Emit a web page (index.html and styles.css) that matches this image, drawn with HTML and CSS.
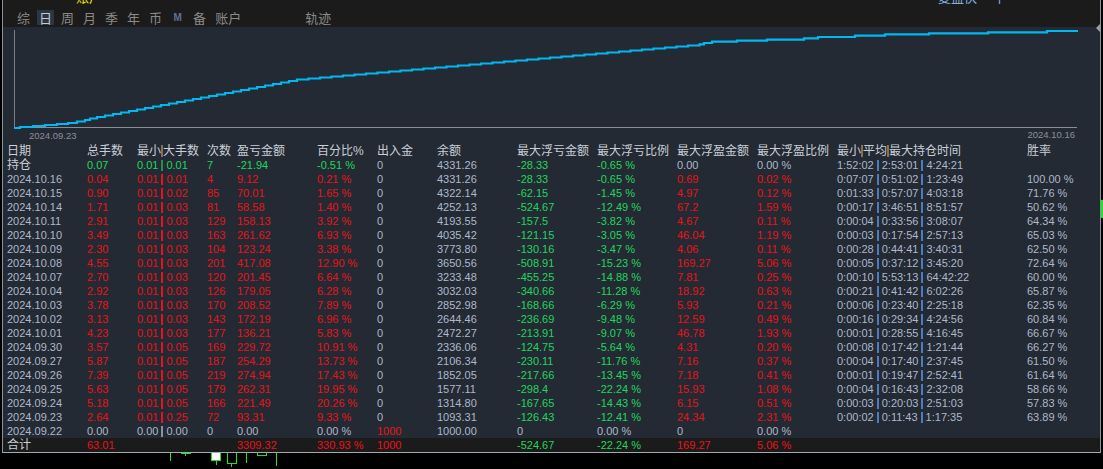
FILE: index.html
```html
<!DOCTYPE html>
<html lang="zh">
<head>
<meta charset="utf-8">
<title>账户统计</title>
<link rel="stylesheet" href="styles.css">
</head>
<body>
<div class="screen">
  <div class="panel">
    <div class="topbar">
      <div class="topcut"><span class="yel">账户</span><span class="blu">复盘快一 丨</span></div>
      <nav class="tabs">
        <span class="tab">综</span>
        <span class="tab on">日</span>
        <span class="tab">周</span>
        <span class="tab">月</span>
        <span class="tab">季</span>
        <span class="tab">年</span>
        <span class="tab">币</span>
        <span class="tab m">M</span>
        <span class="tab">备</span>
        <span class="tab">账户</span>
        <span class="tab far">轨迹</span>
      </nav>
    </div>
    <svg class="chart" width="1097" height="117" viewBox="3 27 1097 117">
      <line x1="14.5" y1="30" x2="14.5" y2="128" stroke="#7a7d82" stroke-width="1"/>
      <line x1="14" y1="127.5" x2="1077" y2="127.5" stroke="#8a8d92" stroke-width="1"/>
      <path fill="none" stroke="#00b8f2" stroke-width="2.2" d="M14 128 H20 V127 H33 V126 H45 V125 H57 V124 H68 V123 H77 V121.5 H85 V120 H90 V118.5 H97 V117 H105 V115.5 H113 V114 H121 V112.5 H129 V111 H137 V109.5 H145 V108 H153 V106.5 H161 V105 H169 V103.5 H177 V102 H185 V100.5 H193 V99 H201 V97.5 H209 V96 H217 V94.5 H225 V93 H233 V91.5 H241 V90 H249 V88.5 H257 V87 H265 V85.5 H273 V84 H281 V82.5 H289 V81 H297 V79.5 H308.5 V78.5 H320 V77.5 H331.5 V76.5 H343 V75.5 H354.5 V74.5 H366 V73.5 H377.5 V72.5 H389 V71.5 H400.5 V70.5 H412 V69.5 H423.5 V68.5 H435 V67.5 H446.5 V66.5 H458 V65.5 H469.5 V64.5 H481 V63.5 H492.5 V62.5 H504 V61.5 H515.5 V60.5 H527 V59.5 H538.5 V58.5 H550 V57.5 H561.5 V56.5 H573 V55.5 H584.5 V54.5 H596 V53.5 H607.5 V52.5 H619 V51.5 H630.5 V50.5 H642 V49.5 H653.5 V48.5 H665 V47.5 H676.5 V46.5 H688 V45.5 H699.5 V44.3 H704 V43 H712 V41.7 H737 V40.7 H767 V39.7 H804 V38.3 H818 V37 H855 V35.7 H885 V34.3 H929 V33.3 H988 V32.3 H1047 V31 H1078"/>
      <text class="axis" x="29" y="138.5">2024.09.23</text>
      <text class="axis" x="1075" y="138" text-anchor="end">2024.10.16</text>
      <polygon points="1100,24 1100,32 1096,28" fill="#9aa0a8"/>
    </svg>
    <div class="table">
      <div class="row head"><span>日期</span><span>总手数</span><span>最小<i class="hb"></i>大手数</span><span>次数</span><span>盈亏金额</span><span>百分比%</span><span>出入金</span><span>余额</span><span>最大浮亏金额</span><span>最大浮亏比例</span><span>最大浮盈金额</span><span>最大浮盈比例</span><span>最小<i class="hb"></i>平均<i class="hb"></i>最大持仓时间</span><span>胜率</span></div>
      <div class="row hold"><span class="cjk">持仓</span><span>0.07</span><span>0.01<i class="sep"></i>0.01</span><span>7</span><span>-21.94</span><span>-0.51 %</span><span>0</span><span>4331.26</span><span>-28.33</span><span>-0.65 %</span><span>0.00</span><span>0.00 %</span><span>1:52:02<i class="tb"></i>2:53:01<i class="tb"></i>4:24:21</span><span></span></div>
      <div class="row day"><span>2024.10.16</span><span>0.04</span><span>0.01<i class="sep"></i>0.01</span><span>4</span><span>9.12</span><span>0.21 %</span><span>0</span><span>4331.26</span><span>-28.33</span><span>-0.65 %</span><span>0.69</span><span>0.02 %</span><span>0:07:07<i class="tb"></i>0:51:02<i class="tb"></i>1:23:49</span><span>100.00 %</span></div>
      <div class="row day"><span>2024.10.15</span><span>0.90</span><span>0.01<i class="sep"></i>0.02</span><span>85</span><span>70.01</span><span>1.65 %</span><span>0</span><span>4322.14</span><span>-62.15</span><span>-1.45 %</span><span>4.97</span><span>0.12 %</span><span>0:01:33<i class="tb"></i>0:57:07<i class="tb"></i>4:03:18</span><span>71.76 %</span></div>
      <div class="row day"><span>2024.10.14</span><span>1.71</span><span>0.01<i class="sep"></i>0.03</span><span>81</span><span>58.58</span><span>1.40 %</span><span>0</span><span>4252.13</span><span>-524.67</span><span>-12.49 %</span><span>67.2</span><span>1.59 %</span><span>0:00:17<i class="tb"></i>3:46:51<i class="tb"></i>8:51:57</span><span>50.62 %</span></div>
      <div class="row day"><span>2024.10.11</span><span>2.91</span><span>0.01<i class="sep"></i>0.03</span><span>129</span><span>158.13</span><span>3.92 %</span><span>0</span><span>4193.55</span><span>-157.5</span><span>-3.82 %</span><span>4.67</span><span>0.11 %</span><span>0:00:04<i class="tb"></i>0:33:56<i class="tb"></i>3:08:07</span><span>64.34 %</span></div>
      <div class="row day"><span>2024.10.10</span><span>3.49</span><span>0.01<i class="sep"></i>0.03</span><span>163</span><span>261.62</span><span>6.93 %</span><span>0</span><span>4035.42</span><span>-121.15</span><span>-3.05 %</span><span>46.04</span><span>1.19 %</span><span>0:00:03<i class="tb"></i>0:17:54<i class="tb"></i>2:57:13</span><span>65.03 %</span></div>
      <div class="row day"><span>2024.10.09</span><span>2.30</span><span>0.01<i class="sep"></i>0.03</span><span>104</span><span>123.24</span><span>3.38 %</span><span>0</span><span>3773.80</span><span>-130.16</span><span>-3.47 %</span><span>4.06</span><span>0.11 %</span><span>0:00:28<i class="tb"></i>0:44:41<i class="tb"></i>3:40:31</span><span>62.50 %</span></div>
      <div class="row day"><span>2024.10.08</span><span>4.55</span><span>0.01<i class="sep"></i>0.03</span><span>201</span><span>417.08</span><span>12.90 %</span><span>0</span><span>3650.56</span><span>-508.91</span><span>-15.23 %</span><span>169.27</span><span>5.06 %</span><span>0:00:05<i class="tb"></i>0:37:12<i class="tb"></i>3:45:20</span><span>72.64 %</span></div>
      <div class="row day"><span>2024.10.07</span><span>2.70</span><span>0.01<i class="sep"></i>0.03</span><span>120</span><span>201.45</span><span>6.64 %</span><span>0</span><span>3233.48</span><span>-455.25</span><span>-14.88 %</span><span>7.81</span><span>0.25 %</span><span>0:00:10<i class="tb"></i>5:53:13<i class="tb"></i>64:42:22</span><span>60.00 %</span></div>
      <div class="row day"><span>2024.10.04</span><span>2.92</span><span>0.01<i class="sep"></i>0.03</span><span>126</span><span>179.05</span><span>6.28 %</span><span>0</span><span>3032.03</span><span>-340.66</span><span>-11.28 %</span><span>18.92</span><span>0.63 %</span><span>0:00:21<i class="tb"></i>0:41:42<i class="tb"></i>6:02:26</span><span>65.87 %</span></div>
      <div class="row day"><span>2024.10.03</span><span>3.78</span><span>0.01<i class="sep"></i>0.03</span><span>170</span><span>208.52</span><span>7.89 %</span><span>0</span><span>2852.98</span><span>-168.66</span><span>-6.29 %</span><span>5.93</span><span>0.21 %</span><span>0:00:06<i class="tb"></i>0:23:40<i class="tb"></i>2:25:18</span><span>62.35 %</span></div>
      <div class="row day"><span>2024.10.02</span><span>3.13</span><span>0.01<i class="sep"></i>0.03</span><span>143</span><span>172.19</span><span>6.96 %</span><span>0</span><span>2644.46</span><span>-236.69</span><span>-9.48 %</span><span>12.59</span><span>0.49 %</span><span>0:00:16<i class="tb"></i>0:29:34<i class="tb"></i>4:24:56</span><span>60.84 %</span></div>
      <div class="row day"><span>2024.10.01</span><span>4.23</span><span>0.01<i class="sep"></i>0.03</span><span>177</span><span>136.21</span><span>5.83 %</span><span>0</span><span>2472.27</span><span>-213.91</span><span>-9.07 %</span><span>46.78</span><span>1.93 %</span><span>0:00:01<i class="tb"></i>0:28:55<i class="tb"></i>4:16:45</span><span>66.67 %</span></div>
      <div class="row day"><span>2024.09.30</span><span>3.57</span><span>0.01<i class="sep"></i>0.05</span><span>169</span><span>229.72</span><span>10.91 %</span><span>0</span><span>2336.06</span><span>-124.75</span><span>-5.64 %</span><span>4.31</span><span>0.20 %</span><span>0:00:08<i class="tb"></i>0:17:42<i class="tb"></i>1:21:44</span><span>66.27 %</span></div>
      <div class="row day"><span>2024.09.27</span><span>5.87</span><span>0.01<i class="sep"></i>0.05</span><span>187</span><span>254.29</span><span>13.73 %</span><span>0</span><span>2106.34</span><span>-230.11</span><span>-11.76 %</span><span>7.16</span><span>0.37 %</span><span>0:00:04<i class="tb"></i>0:17:40<i class="tb"></i>2:37:45</span><span>61.50 %</span></div>
      <div class="row day"><span>2024.09.26</span><span>7.39</span><span>0.01<i class="sep"></i>0.05</span><span>219</span><span>274.94</span><span>17.43 %</span><span>0</span><span>1852.05</span><span>-217.66</span><span>-13.45 %</span><span>7.18</span><span>0.41 %</span><span>0:00:01<i class="tb"></i>0:19:47<i class="tb"></i>2:52:41</span><span>61.64 %</span></div>
      <div class="row day"><span>2024.09.25</span><span>5.63</span><span>0.01<i class="sep"></i>0.05</span><span>179</span><span>262.31</span><span>19.95 %</span><span>0</span><span>1577.11</span><span>-298.4</span><span>-22.24 %</span><span>15.93</span><span>1.08 %</span><span>0:00:04<i class="tb"></i>0:16:43<i class="tb"></i>2:32:08</span><span>58.66 %</span></div>
      <div class="row day"><span>2024.09.24</span><span>5.18</span><span>0.01<i class="sep"></i>0.05</span><span>166</span><span>221.49</span><span>20.26 %</span><span>0</span><span>1314.80</span><span>-167.65</span><span>-14.43 %</span><span>6.15</span><span>0.51 %</span><span>0:00:03<i class="tb"></i>0:20:03<i class="tb"></i>2:51:03</span><span>57.83 %</span></div>
      <div class="row day"><span>2024.09.23</span><span>2.64</span><span>0.01<i class="sep"></i>0.25</span><span>72</span><span>93.31</span><span>9.33 %</span><span>0</span><span>1093.31</span><span>-126.43</span><span>-12.41 %</span><span>24.34</span><span>2.31 %</span><span>0:00:02<i class="tb"></i>0:11:43<i class="tb"></i>1:17:35</span><span>63.89 %</span></div>
      <div class="row first"><span>2024.09.22</span><span>0.00</span><span>0.00<i class="sep"></i>0.00</span><span>0</span><span>0.00</span><span>0.00 %</span><span>1000</span><span>1000.00</span><span>0</span><span>0.00 %</span><span>0</span><span>0.00 %</span><span></span><span></span></div>
      <div class="row total"><span class="cjk">合计</span><span>63.01</span><span></span><span></span><span>3309.32</span><span>330.93 %</span><span>1000</span><span></span><span>-524.67</span><span>-22.24 %</span><span>169.27</span><span>5.06 %</span><span></span><span></span></div>
    </div>
  </div>
  <div class="side"><i class="sidebar"></i></div>
</div>
<svg class="candles" width="1103" height="16" viewBox="0 453 1103 16">
  <g stroke="#1ee61e" fill="none" stroke-width="1">
    <line x1="170.5" y1="453" x2="170.5" y2="461"/>
    <line x1="181" y1="453.5" x2="191" y2="453.5"/>
    <line x1="185.5" y1="453" x2="185.5" y2="456"/>
    <rect x="211.5" y="452.5" width="9" height="8" fill="#ffffff"/>
    <line x1="216.5" y1="461" x2="216.5" y2="465"/>
    <rect x="227.5" y="452.5" width="9" height="11"/>
    <line x1="231.5" y1="464" x2="231.5" y2="467"/>
    <line x1="246.5" y1="453" x2="246.5" y2="463"/>
    <rect x="257.5" y="452.5" width="9" height="3"/>
    <line x1="276.5" y1="453" x2="276.5" y2="466"/>
  </g>
</svg>
</body>
</html>
```

FILE: styles.css
```css
html, body {
  margin: 0;
  padding: 0;
  background: #000000;
}

body {
  width: 1103px;
  height: 469px;
  overflow: hidden;
  font-family: "Liberation Sans", "Noto Sans CJK SC", sans-serif;
}

.screen {
  display: flex;
  align-items: flex-start;
}

.panel {
  margin-left: 2px;
  width: 1099px;
  box-sizing: border-box;
  border-left: 1px solid #8c929c;
  border-right: 1px solid #8c929c;
  border-bottom: 1px solid #a2a9b4;
  background: #242a33;
}

.topbar {
  background: #1b1b1b;
  height: 27px;
}

.topcut {
  height: 4px;
  overflow: hidden;
  display: flex;
  padding-left: 73px;
  font-size: 13px;
  line-height: 13px;
}

.topcut span {
  margin-top: -10px;
  font-family: "Noto Sans CJK SC", sans-serif;
}

.yel {
  color: #f2e600;
}

.blu {
  color: #86aee0;
  margin-left: 836px;
}

.tabs {
  height: 23px;
  box-sizing: border-box;
  padding-top: 4px;
  padding-left: 12px;
  display: flex;
  align-items: center;
  gap: 5px;
}

.tab {
  font-family: "Noto Sans CJK SC", sans-serif;
  font-size: 13px;
  line-height: 15px;
  min-width: 13px;
  padding: 0 2px;
  text-align: center;
  color: #8a8a8a;
}

.tab.on {
  background: #2c3541;
  color: #c4cad4;
}

.tab.m {
  font-family: "Liberation Sans", sans-serif;
  font-size: 10px;
  font-weight: bold;
  color: #5f7292;
}

.tab.far {
  margin-left: 55px;
}

.chart {
  display: block;
  overflow: visible;
}

.axis {
  font-family: "Liberation Sans", sans-serif;
  font-size: 9.5px;
  fill: #8a9099;
}

.table {
  display: flex;
  flex-direction: column;
}

.row {
  display: grid;
  grid-template-columns: 80px 50px 70px 30px 80px 60px 60px 80px 80px 80px 80px 80px 190px 1fr;
  height: 14px;
  line-height: 14px;
  padding-left: 4px;
  font-size: 11px;
  color: #adb8cc;
  white-space: nowrap;
}

.head {
  font-size: 12px;
  color: #c9ced8;
}

.cjk {
  font-size: 12px;
  color: #c9ced8;
}

.hb {
  display: inline-block;
  width: 2px;
  height: 12px;
  background: #86704e;
  vertical-align: -2px;
}

.sep {
  display: inline-block;
  width: 2px;
  height: 11px;
  margin: 0 3px;
  background: currentColor;
  vertical-align: -2px;
}

.tb {
  display: inline-block;
  width: 2px;
  height: 11px;
  margin: 0 3px;
  background: #4d7cbc;
  vertical-align: -2px;
}

/* day rows */
.day > :nth-child(n+2):nth-child(-n+6),
.day > :nth-child(11),
.day > :nth-child(12) {
  color: #ea1218;
}

.day > :nth-child(9),
.day > :nth-child(10) {
  color: #1ed65e;
}

/* open positions row */
.hold > :nth-child(n+2):nth-child(-n+6),
.hold > :nth-child(9),
.hold > :nth-child(10) {
  color: #1ed65e;
}

.hold .sep {
  opacity: 0.6;
}

/* first day */
.first .sep {
  background: #8a8f98;
}

.first > :nth-child(7) {
  color: #ea1218;
}

/* total row */
.total {
  background: #1b1b1b;
}

.total > :nth-child(2),
.total > :nth-child(5),
.total > :nth-child(6),
.total > :nth-child(7),
.total > :nth-child(11),
.total > :nth-child(12) {
  color: #ea1218;
}

.total > :nth-child(9),
.total > :nth-child(10) {
  color: #1ed65e;
}

.side {
  width: 2px;
}

.sidebar {
  display: block;
  margin-top: 200px;
  height: 18px;
  background: #1ee61e;
}

.candles {
  display: block;
}
```
